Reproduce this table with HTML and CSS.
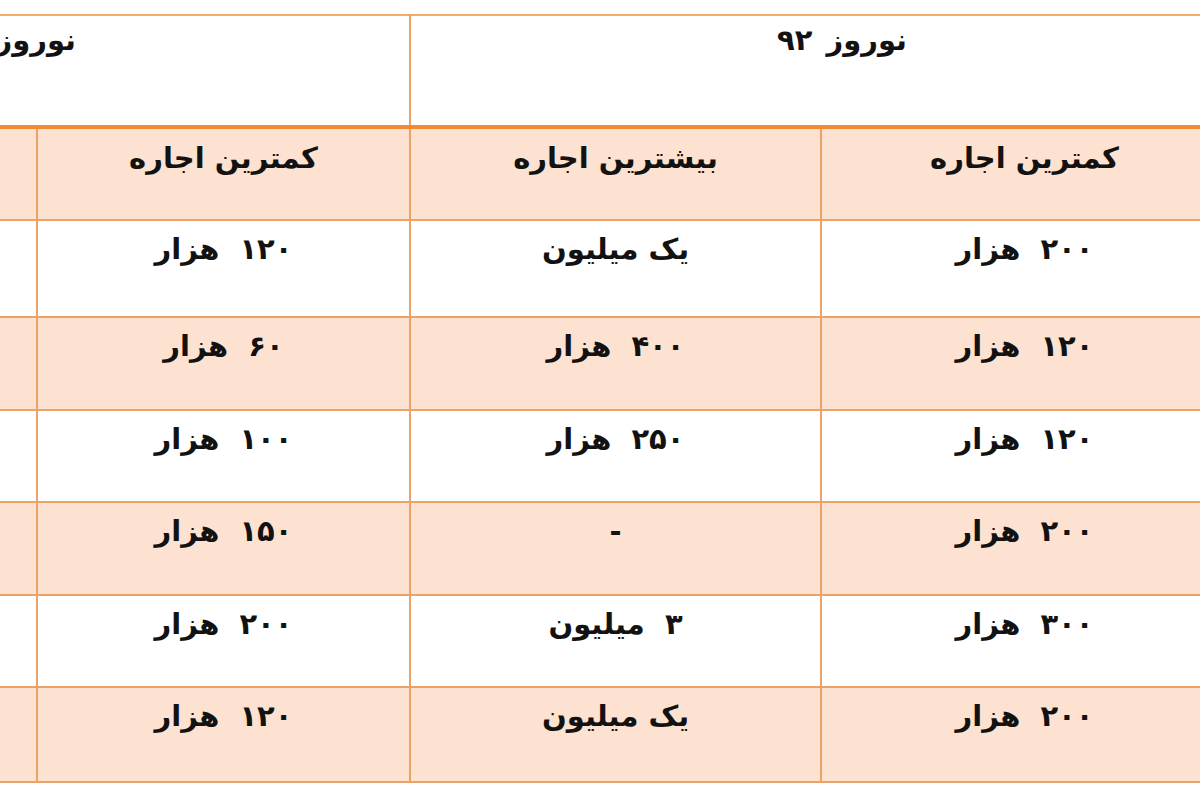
FILE: index.html
```html
<!DOCTYPE html>
<html lang="fa">
<head>
<meta charset="utf-8">
<title>اجاره نوروز</title>
<link rel="stylesheet" href="styles.css">
</head>
<body>
<div class="viewport">
  <table class="rent" dir="rtl">
    <colgroup>
      <col class="c-a">
      <col class="c-b">
      <col class="c-c">
      <col class="c-d">
    </colgroup>
    <tr class="year">
      <td colspan="2" class="y92">نوروز <span class="num">۹۲</span></td>
      <td colspan="2" class="y93">نوروز <span class="num">۹۳</span></td>
    </tr>
    <tr class="head peach">
      <td>کمترین اجاره</td>
      <td>بیشترین اجاره</td>
      <td>کمترین اجاره</td>
      <td>بیشترین اجاره</td>
    </tr>
    <tr class="r1">
      <td><span class="num">۲۰۰</span> هزار</td>
      <td>یک میلیون</td>
      <td><span class="num">۱۲۰</span> هزار</td>
      <td><span class="num">۵۰۰</span> هزار</td>
    </tr>
    <tr class="r2 peach">
      <td><span class="num">۱۲۰</span> هزار</td>
      <td><span class="num">۴۰۰</span> هزار</td>
      <td><span class="num">۶۰</span> هزار</td>
      <td><span class="num">۳۰۰</span> هزار</td>
    </tr>
    <tr class="r3">
      <td><span class="num">۱۲۰</span> هزار</td>
      <td><span class="num">۲۵۰</span> هزار</td>
      <td><span class="num">۱۰۰</span> هزار</td>
      <td><span class="num">۲۰۰</span> هزار</td>
    </tr>
    <tr class="r4 peach">
      <td><span class="num">۲۰۰</span> هزار</td>
      <td>-</td>
      <td><span class="num">۱۵۰</span> هزار</td>
      <td>-</td>
    </tr>
    <tr class="r5">
      <td><span class="num">۳۰۰</span> هزار</td>
      <td><span class="num">۳</span> میلیون</td>
      <td><span class="num">۲۰۰</span> هزار</td>
      <td><span class="num">۲</span> میلیون</td>
    </tr>
    <tr class="r6 peach">
      <td><span class="num">۲۰۰</span> هزار</td>
      <td>یک میلیون</td>
      <td><span class="num">۱۲۰</span> هزار</td>
      <td><span class="num">۸۰۰</span> هزار</td>
    </tr>
  </table>
</div>
</body>
</html>
```
FILE: styles.css
```css
html, body {
  margin: 0;
  padding: 0;
  background: #ffffff;
}

.viewport {
  width: 1200px;
  height: 800px;
  overflow: hidden;
  padding-top: 14px;
  box-sizing: border-box;
}

.rent {
  direction: rtl;
  border-collapse: collapse;
  table-layout: fixed;
  width: 1600px;
  margin-left: -373px;
  font-family: "DejaVu Sans", "Noto Sans", sans-serif;
  font-weight: bold;
  font-size: 29px;
  line-height: 36px;
  color: #121212;
}

.c-a { width: 407px; }
.c-b { width: 411px; }
.c-c { width: 373px; }
.c-d { width: 409px; }

.rent td {
  border: 2px solid #eaa265;
  text-align: center;
  vertical-align: top;
  padding: 10px 4px 0;
}

.num {
  letter-spacing: 6px;
  margin-left: 10px;
}

.rent .year td {
  height: 103px;
  padding-top: 6px;
  border-top-color: #f1ab6a;
  border-bottom: 4px solid #f08a33;
}

.rent .year .num {
  letter-spacing: 12px;
  margin-right: 4px;
}

.rent .year .y92 {
  padding-left: 40px;
}

.rent .year .y93 {
  padding-right: 30px;
}

.rent .head td {
  height: 79px;
  padding-top: 11px;
}

.rent .r1 td { height: 85px; }
.rent .r2 td { height: 81px; }
.rent .r3 td { height: 80px; }
.rent .r4 td { height: 81px; }
.rent .r5 td { height: 80px; }
.rent .r6 td { height: 83px; }

.rent .peach td {
  background: #fde2d1;
}
```
